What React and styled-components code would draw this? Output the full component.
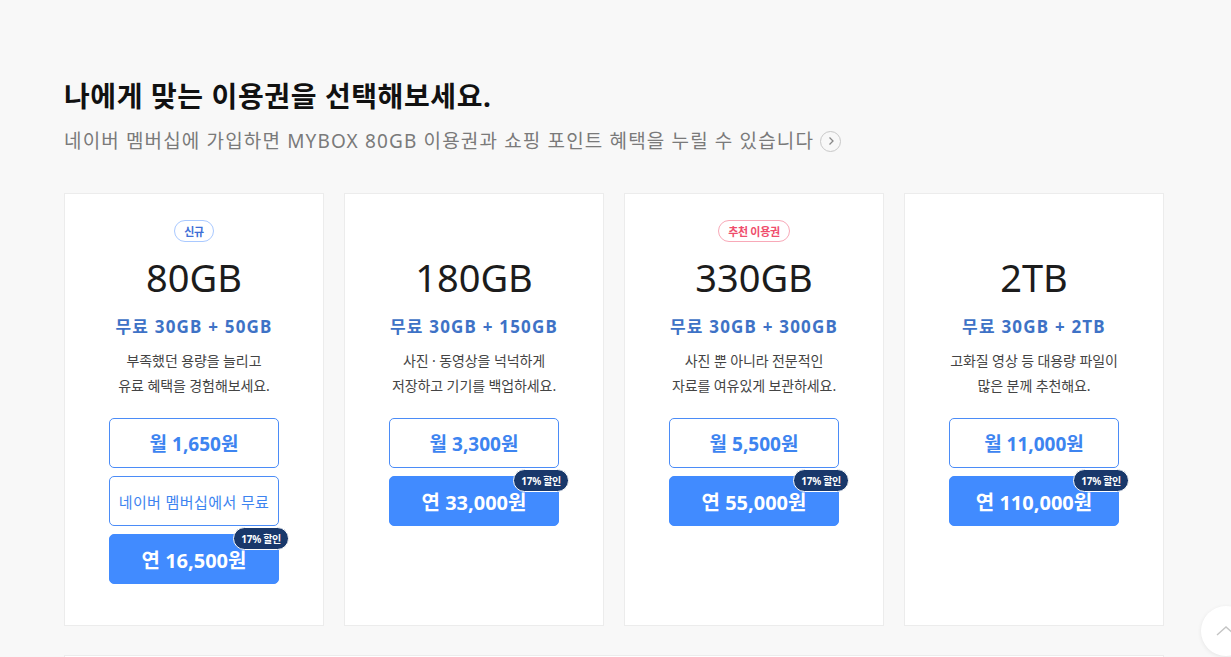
import React from "react";
import styled, { createGlobalStyle } from "styled-components";

const Global = createGlobalStyle`
  html, body { margin: 0; padding: 0; background: #f8f8f8; }
  body { font-family: "Noto Sans", "Noto Sans CJK KR", sans-serif; color: #222; overflow: hidden; }
  * { box-sizing: border-box; }
`;

const Page = styled.div`
  width: 1231px;
  height: 657px;
  overflow: hidden;
  position: relative;
  background: #f8f8f8;
`;

const Section = styled.section`
  width: 1100px;
  margin-left: 64px;
  padding-top: 74px;
`;

const Title = styled.h2`
  margin: 0;
  font-size: 28px;
  font-weight: 700;
  line-height: 44px;
  letter-spacing: 0.6px;
  color: #111;
`;

const Sub = styled.p`
  margin: 7px 0 0;
  display: flex;
  align-items: center;
  gap: 6px;
  font-size: 19px;
  line-height: 32px;
  color: #7a7a7a;
  letter-spacing: 1.15px;
`;

const CircleArrow = styled.span`
  display: inline-flex;
  width: 21px;
  height: 21px;
  border-radius: 50%;
  border: 1px solid #c8c8c8;
  align-items: center;
  justify-content: center;
`;

const Cards = styled.div`
  margin-top: 36px;
  display: grid;
  grid-template-columns: repeat(4, 260px);
  gap: 20px;
`;

const Card = styled.div`
  background: #fff;
  border: 1px solid #ececec;
  height: 433px;
  padding: 26px 0 0;
  display: flex;
  flex-direction: column;
  align-items: center;
`;

const BadgeRow = styled.div`
  height: 22px;
  display: flex;
  align-items: center;
  justify-content: center;
`;

const Badge = styled.span`
  display: inline-flex;
  align-items: center;
  height: 22px;
  padding: 0 9px;
  border-radius: 11px;
  border: 1px solid ${p => (p.$pink ? "#f8a9b8" : "#a9c9ff")};
  color: ${p => (p.$pink ? "#ef4d6c" : "#3f6fd6")};
  font-size: 11px;
  font-weight: 700;
  letter-spacing: -0.3px;
`;

const Size = styled.div`
  margin-top: 11px;
  font-family: "Noto Sans", sans-serif;
  font-size: 38px;
  font-weight: 400;
  line-height: 48px;
  color: #1c1c1c;
`;

const Free = styled.div`
  margin-top: 13px;
  font-size: 17px;
  font-weight: 700;
  color: #3e72c6;
  line-height: 26px;
  letter-spacing: 1.2px;
`;

const Desc = styled.p`
  margin: 8px 0 0;
  text-align: center;
  font-size: 14px;
  line-height: 25px;
  color: #444;
  letter-spacing: -0.1px;
`;

const Buttons = styled.div`
  margin-top: 20px;
  display: flex;
  flex-direction: column;
  gap: 8px;
  width: 170px;
`;

const Btn = styled.button`
  position: relative;
  height: 50px;
  width: 170px;
  border-radius: 5px;
  border: 1px solid #4b8cf7;
  background: ${p => (p.$filled ? "#418bff" : "#fff")};
  border-color: ${p => (p.$filled ? "#418bff" : "#4b8cf7")};
  color: ${p => (p.$filled ? "#fff" : "#3d84f0")};
  font-family: "Noto Sans", "Noto Sans CJK KR", sans-serif;
  font-size: ${p => (p.$small ? "15px" : p.$filled ? "20px" : "19px")};
  font-weight: ${p => (p.$small ? 400 : 700)};
  letter-spacing: ${p => (p.$small ? "0.4px" : "0")};
  padding: 0;
  cursor: pointer;
`;

const Sale = styled.span`
  position: absolute;
  top: -8px;
  right: -11px;
  height: 23px;
  padding: 0 7px;
  display: inline-flex;
  align-items: center;
  border-radius: 12px;
  background: #19386b;
  border: 1px solid #fff;
  color: #fff;
  font-size: 10px;
  font-weight: 700;
  letter-spacing: -0.3px;
`;

const Bottom = styled.div`
  margin-top: 29px;
  height: 40px;
  background: #fff;
  border: 1px solid #ececec;
`;

const TopBtn = styled.button`
  position: fixed;
  left: 1201px;
  top: 606px;
  width: 50px;
  height: 50px;
  border-radius: 50%;
  background: #fff;
  border: none;
  box-shadow: 0 1px 4px rgba(0, 0, 0, 0.08);
  display: flex;
  align-items: center;
  justify-content: center;
  padding: 0;
`;

const plans = [
  {
    badge: "신규",
    size: "80GB",
    free: "무료 30GB + 50GB",
    desc: ["부족했던 용량을 늘리고", "유료 혜택을 경험해보세요."],
    month: "월 1,650원",
    member: true,
    year: "연 16,500원",
  },
  {
    size: "180GB",
    free: "무료 30GB + 150GB",
    desc: ["사진 · 동영상을 넉넉하게", "저장하고 기기를 백업하세요."],
    month: "월 3,300원",
    year: "연 33,000원",
  },
  {
    badge: "추천 이용권",
    pink: true,
    size: "330GB",
    free: "무료 30GB + 300GB",
    desc: ["사진 뿐 아니라 전문적인", "자료를 여유있게 보관하세요."],
    month: "월 5,500원",
    year: "연 55,000원",
  },
  {
    size: "2TB",
    free: "무료 30GB + 2TB",
    desc: ["고화질 영상 등 대용량 파일이", "많은 분께 추천해요."],
    month: "월 11,000원",
    year: "연 110,000원",
  },
];

export default function App() {
  return (
    <Page>
      <Global />
      <Section>
        <Title>나에게 맞는 이용권을 선택해보세요.</Title>
        <Sub>
          네이버 멤버십에 가입하면 MYBOX 80GB 이용권과 쇼핑 포인트 혜택을 누릴 수 있습니다
          <CircleArrow>
            <svg width="10" height="10" viewBox="0 0 10 10">
              <path d="M3.5 1.5 L7 5 L3.5 8.5" fill="none" stroke="#888" strokeWidth="1.3" />
            </svg>
          </CircleArrow>
        </Sub>
        <Cards>
          {plans.map(p => (
            <Card key={p.size}>
              <BadgeRow>{p.badge && <Badge $pink={p.pink}>{p.badge}</Badge>}</BadgeRow>
              <Size>{p.size}</Size>
              <Free>{p.free}</Free>
              <Desc>
                {p.desc[0]}
                <br />
                {p.desc[1]}
              </Desc>
              <Buttons>
                <Btn>{p.month}</Btn>
                {p.member && <Btn $small>네이버 멤버십에서 무료</Btn>}
                <Btn $filled>
                  {p.year}
                  <Sale>17% 할인</Sale>
                </Btn>
              </Buttons>
            </Card>
          ))}
        </Cards>
        <Bottom />
      </Section>
      <TopBtn aria-label="맨 위로">
        <svg width="22" height="12" viewBox="0 0 22 12">
          <path d="M2 10 L11 2 L20 10" fill="none" stroke="#c4c4c4" strokeWidth="1.4" />
        </svg>
      </TopBtn>
    </Page>
  );
}
